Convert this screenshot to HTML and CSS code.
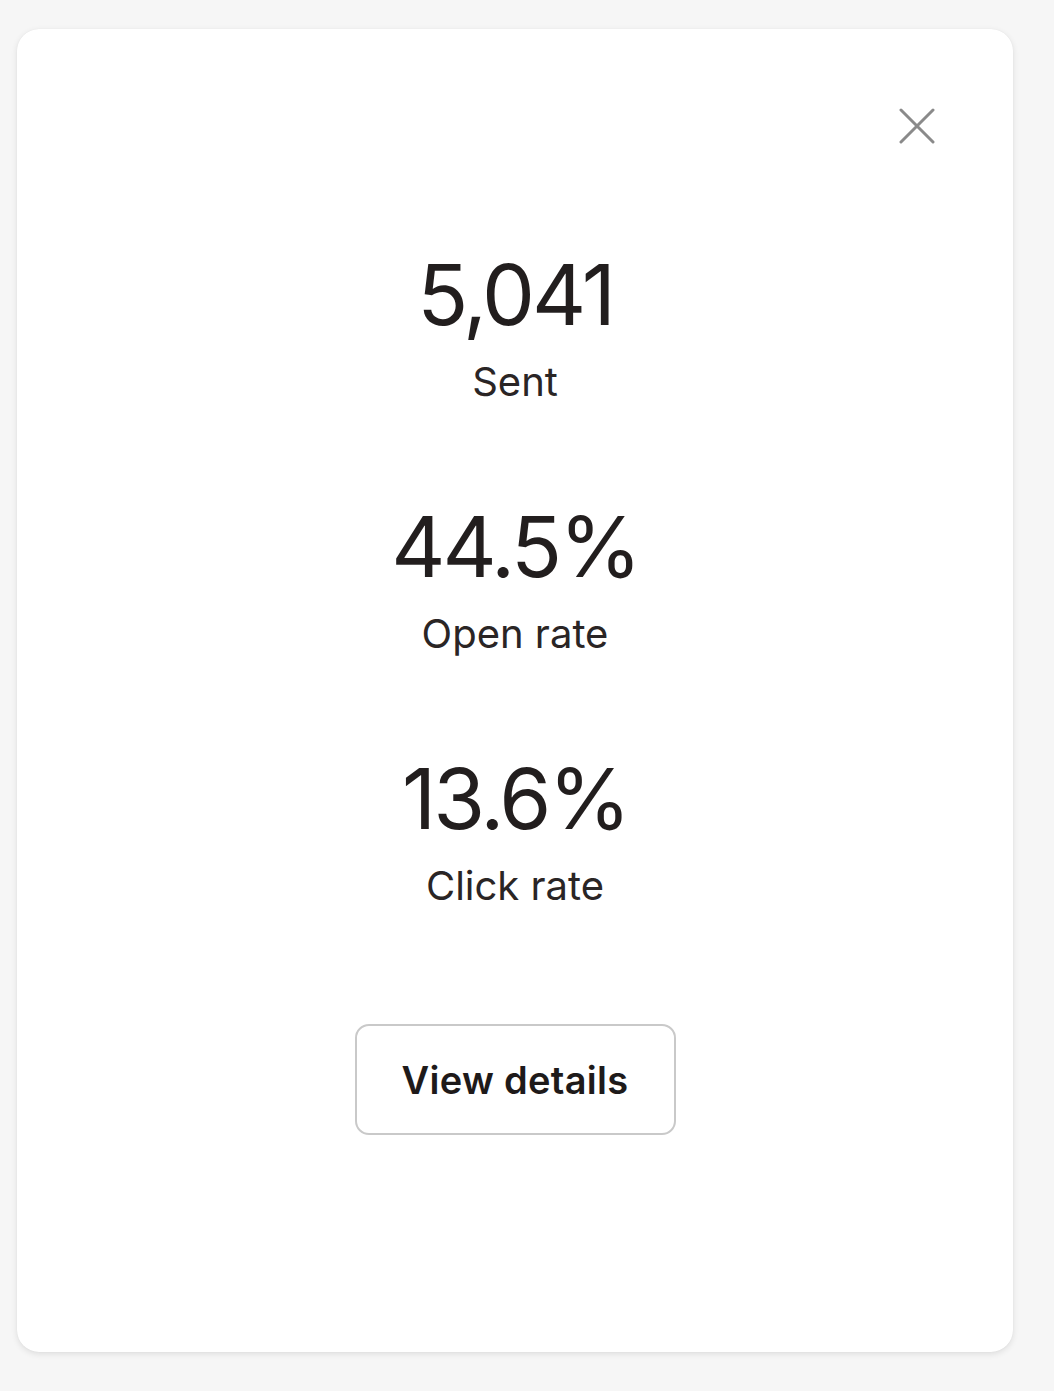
FILE: index.html
```html
<!DOCTYPE html>
<html lang="en">
<head>
<meta charset="utf-8">
<title>Stats</title>
<link rel="stylesheet" href="styles.css">
</head>
<body>
<div class="card">
  <div class="card-header">
    <button class="close" aria-label="Close">
      <svg width="36" height="36" viewBox="0 0 36 36"><path d="M2 2 L34 34 M34 2 L2 34" stroke="#8a8a8a" stroke-width="3" stroke-linecap="round" fill="none"/></svg>
    </button>
  </div>
  <div class="stats">
    <div class="stat">
      <div class="value">5,041</div>
      <div class="label">Sent</div>
    </div>
    <div class="stat">
      <div class="value">44.5%</div>
      <div class="label">Open rate</div>
    </div>
    <div class="stat">
      <div class="value">13.6%</div>
      <div class="label">Click rate</div>
    </div>
  </div>
  <div class="actions">
    <button class="details">View details</button>
  </div>
</div>
</body>
</html>
```
FILE: styles.css
```css
html, body {
  margin: 0;
  padding: 0;
}
body {
  background: #f6f6f6;
  font-family: Inter, "Noto Sans", sans-serif;
  color: #221e1e;
  padding: 29px 41px 0 17px;
  height: 1391px;
  box-sizing: border-box;
}
.card {
  background: #ffffff;
  height: 1323px;
  border-radius: 22px;
  box-shadow: 0 2px 6px rgba(0,0,0,0.10), 0 0 1px rgba(0,0,0,0.08);
  box-sizing: border-box;
  padding: 79px 78px 0 0;
  display: flex;
  flex-direction: column;
}
.card-header {
  display: flex;
  justify-content: flex-end;
}
.close {
  border: 0;
  background: none;
  padding: 0;
  width: 36px;
  height: 36px;
  display: flex;
}
.stats {
  display: flex;
  flex-direction: column;
  align-items: center;
  gap: 90px;
  margin-top: 101px;
  padding-left: 78px;
}
.stat {
  display: flex;
  flex-direction: column;
  align-items: center;
}
.value {
  font-size: 84px;
  line-height: 100px;
  font-weight: 400;
  letter-spacing: -3px;
}
.label {
  margin-top: 12px;
  font-size: 40px;
  line-height: 50px;
  font-weight: 400;
  color: #2a2525;
}
.actions {
  display: flex;
  justify-content: center;
  padding-left: 78px;
  margin-top: 113px;
}
.details {
  width: 321px;
  height: 111px;
  border: 2px solid #c9c9c9;
  border-radius: 14px;
  background: #fff;
  font-family: Inter, "Noto Sans", sans-serif;
  font-size: 38px;
  font-weight: 600;
  letter-spacing: 0.3px;
  color: #1e1a1a;
}
```
